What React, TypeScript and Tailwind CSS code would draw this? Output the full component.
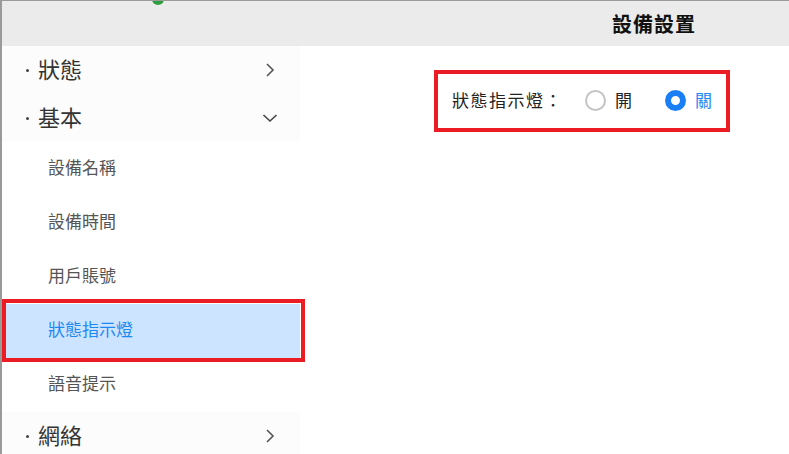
import React from "react";

const font = { fontFamily: '"Noto Sans CJK TC", "Noto Sans", sans-serif' };

function ChevronRight() {
  return (
    <svg width="12" height="16" viewBox="0 0 12 16" fill="none">
      <path d="M3 2 L9 8 L3 14" stroke="#555" strokeWidth="1.6" />
    </svg>
  );
}
function ChevronDown() {
  return (
    <svg width="16" height="10" viewBox="0 0 16 10" fill="none">
      <path d="M1.5 2 L8 8 L14.5 2" stroke="#444" strokeWidth="1.6" />
    </svg>
  );
}

function Group({ label, open }: { label: string; open?: boolean }) {
  return (
    <div className="h-[48px] bg-[#fcfcfc] flex items-center pl-[24px] pr-[22px]">
      <span className="w-[3px] h-[3px] bg-[#444] rounded-full" />
      <span className="ml-[9px] text-[22px] text-[#333] leading-none pb-[5px]">{label}</span>
      <span className="ml-auto flex items-center justify-center w-[16px]">
        {open ? <ChevronDown /> : <ChevronRight />}
      </span>
    </div>
  );
}

function Item({ label, active }: { label: string; active?: boolean }) {
  return (
    <div
      className={
        "relative h-[54px] flex items-center pl-[46px] pb-[4px] text-[17px] " +
        (active ? "bg-[#cce4ff] text-[#1e88f2]" : "bg-white text-[#555]")
      }
    >
      {label}
      {active && (
        <div className="absolute z-10 left-0 top-[-5px] w-[303px] h-[63px] border-[4px] border-[#ec1c24]" />
      )}
    </div>
  );
}

export default function App() {
  return (
    <div
      className="relative w-[789px] h-[454px] overflow-hidden bg-white border-t border-l-2 border-[#9a9a9a]"
      style={font}
    >
      <div className="absolute left-[150px] top-[-8px] w-[12px] h-[12px] rounded-full bg-[#2e9e3e]" />
      <div className="h-[45px] bg-[#ebebeb] flex items-center pl-[610px]">
        <span className="text-[20px] font-bold text-[#111] tracking-[1px]">設備設置</span>
      </div>
      <div className="flex">
        <div className="w-[298px] shrink-0 flex flex-col">
          <Group label="狀態" />
          <Group label="基本" open />
          <Item label="設備名稱" />
          <Item label="設備時間" />
          <Item label="用戶賬號" />
          <Item label="狀態指示燈" active />
          <Item label="語音提示" />
          <Group label="網絡" />
        </div>
        <div className="flex-1 pl-[134px] pt-[24px]">
          <div className="w-[296px] h-[62px] border-[4px] border-[#ec1c24] flex items-center pl-[14px] pb-[2px]">
            <span className="text-[17px] text-[#222] tracking-[1.5px]">狀態指示燈：</span>
            <div className="ml-[22px] flex items-center">
              <span className="w-[21px] h-[21px] rounded-full border-[2px] border-[#c4c4c4] bg-white" />
              <span className="ml-[9px] text-[17px] text-[#222]">開</span>
            </div>
            <div className="ml-[33px] flex items-center">
              <span className="w-[21px] h-[21px] rounded-full border-[6px] border-[#1a7ff5] bg-white" />
              <span className="ml-[9px] text-[17px] text-[#1e88f2]">關</span>
            </div>
          </div>
        </div>
      </div>
    </div>
  );
}
